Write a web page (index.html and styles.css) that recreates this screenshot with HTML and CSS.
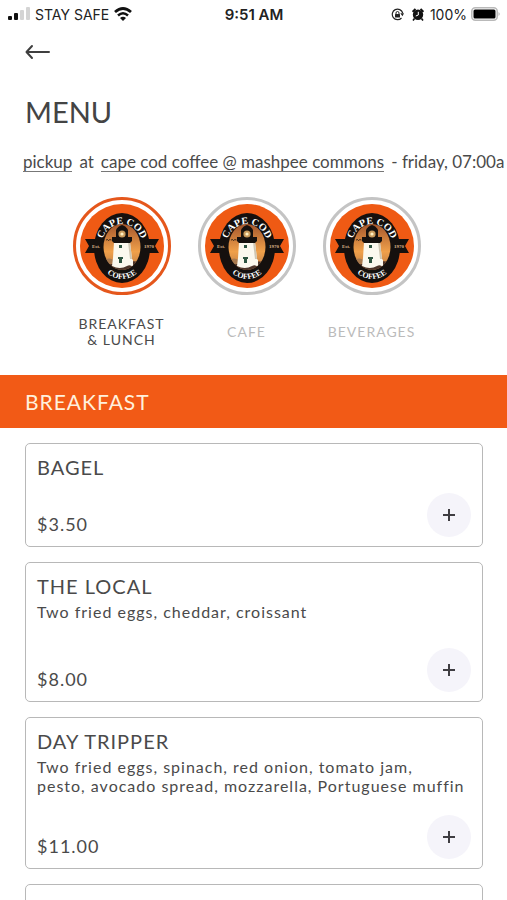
FILE: index.html
```
<!DOCTYPE html>
<html lang="en">
<head>
    <meta charset="UTF-8">
    <meta name="viewport" content="width=device-width, initial-scale=1.0">
    <title>Menu - Cape Cod Coffee</title>
    <link rel="stylesheet" href="styles.css">
</head>
<body>
    <!-- Shared logo -->
    <svg class="defs" width="0" height="0" aria-hidden="true">
        <defs>
            <linearGradient id="sky" x1="0" y1="0" x2="0" y2="1">
                <stop offset="0" stop-color="#a5562c"/>
                <stop offset="0.6" stop-color="#f0a04a"/>
                <stop offset="1" stop-color="#b97a45"/>
            </linearGradient>
            <clipPath id="scene"><ellipse cx="42" cy="43" rx="18.500" ry="23"/></clipPath>
            <path id="arcTop" d="M21 44 A21 24 0 0 1 63 44"/>
            <path id="arcBottom" d="M16 44 A26 31 0 0 0 68 44"/>
            <symbol id="logo" viewBox="0 0 84 84">
                <circle cx="42" cy="42" r="42" fill="#ef5a14"/>
                <path d="M5 35 H79 L75 42 L79 49 H5 L9 42 Z" fill="#15100e"/>
                <ellipse cx="42" cy="44" rx="28" ry="35" fill="#15100e"/>
                <ellipse cx="42" cy="43" rx="18.500" ry="23" fill="url(#sky)"/>
                <g clip-path="url(#scene)">
                    <path d="M22 58 Q32 55 62 58 V68 H22 Z" fill="#4c342a"/>
                    <path d="M24 56 Q29 53 34 56 V60 H24 Z" fill="#a8794d"/>
                    <path d="M34 38 H50 L52 55 L53 56 V63 Q50 60 47 62 Q40 66 32 62 L33 54 Z" fill="#fbf8ee"/>
                    <path d="M48 38 H50 L52 55 H50 Z" fill="#cfc6b3"/>
                </g>
                <path d="M36 34 V26 Q38 22 42 21 Q46 22 48 26 V34 Z" fill="#15100e"/>
                <path d="M32 33 H52 V37 L50 39 H34 L32 37 Z" fill="#15100e"/>
                <circle cx="42" cy="30" r="3.600" fill="#c99a5c"/>
                <circle cx="42" cy="30" r="1.600" fill="#fff1c4"/>
                <path d="M39 41 H42 V44 H39 Z M38 53 H43 V55 H42 V59 H39 V55 H38 Z" fill="#2d5340"/>
                <path d="M26 36 q2 -1 2.500 .5 q1 -1.500 3 -.5" fill="none" stroke="#15100e" stroke-width="0.800"/>
                <text class="logo-name"><textPath href="#arcTop" startOffset="50%">CAPE COD</textPath></text>
                <text class="logo-sub"><textPath href="#arcBottom" startOffset="50%">COFFEE</textPath></text>
                <text class="logo-year" x="16" y="44">Est.</text>
                <text class="logo-year" x="69" y="44">1970</text>
            </symbol>
        </defs>
    </svg>

    <!-- Status bar -->
    <div class="status-bar">
        <div class="status-left">
            <svg width="22" height="14" viewBox="0 0 22 14" aria-hidden="true">
                <rect x="0" y="9" width="4" height="4" rx="1" fill="#111"/>
                <rect x="6" y="6" width="4" height="7" rx="1" fill="#111"/>
                <rect x="12" y="3" width="4" height="10" rx="1" fill="#d4d4d4"/>
                <rect x="18" y="0" width="4" height="13" rx="1" fill="#d4d4d4"/>
            </svg>
            <span>STAY SAFE</span>
            <svg width="18" height="14" viewBox="0 0 18 14" aria-hidden="true">
                <path d="M1 5 Q9 -2 17 5" fill="none" stroke="#111" stroke-width="2.800"/>
                <path d="M4 8.500 Q9 4 14 8.500" fill="none" stroke="#111" stroke-width="2.500"/>
                <path d="M6 11 Q9 8.400 12 11 L9 14 Z" fill="#111"/>
            </svg>
        </div>
        <div class="status-time">9:51 AM</div>
        <div class="status-right">
            <svg width="13" height="13" viewBox="0 0 13 13" aria-hidden="true">
                <path d="M10.500 10 A5.300 5.300 0 1 1 11.700 5" fill="none" stroke="#222" stroke-width="1.200"/>
                <path d="M9.300 5.300 H13 L11.500 8.200 Z" fill="#222"/>
                <rect x="4" y="6" width="5" height="3.600" rx="0.500" fill="#222"/>
                <path d="M5 6.200 V5 A1.500 1.500 0 0 1 8 5 V6.200" fill="none" stroke="#222"/>
            </svg>
            <svg class="alarm" width="12" height="13" viewBox="0 0 12 13" aria-hidden="true">
                <circle cx="6" cy="6.800" r="5.200" fill="#111"/>
                <path d="M0.500 3.800 L3.500 1 M11.500 3.800 L8.500 1" stroke="#111" stroke-width="2"/>
                <path d="M2.500 10.500 L1 12.500 M9.500 10.500 L11 12.500" stroke="#111" stroke-width="1.600"/>
                <path d="M6.300 3.800 V7 L3.800 8" fill="none" stroke="#fff"/>
            </svg>
            <span>100%</span>
            <svg width="29" height="14" viewBox="0 0 29 14" aria-hidden="true">
                <rect x="0.800" y="0.800" width="25.400" height="12.400" rx="3.500" fill="#fff" stroke="#b9b9b9" stroke-width="1.500"/>
                <rect x="2.500" y="2.500" width="22" height="9" rx="1.500" fill="#000"/>
                <path d="M27.500 5 Q30 7 27.500 9 Z" fill="#b9b9b9"/>
            </svg>
        </div>
    </div>

    <header class="header">
        <button class="back" type="button" aria-label="Back">
            <svg width="25" height="16" viewBox="0 0 25 16" aria-hidden="true">
                <path d="M24 8 H2 M7 2 L1.500 8 L7 14" fill="none" stroke="#3f3f3f" stroke-width="2" stroke-linecap="round" stroke-linejoin="round"/>
            </svg>
        </button>
        <h1>MENU</h1>
        <p class="order-info"><a href="#">pickup</a><span>at</span><a href="#">cape cod coffee @ mashpee commons</a><span>- friday, 07:00a</span></p>
    </header>

    <!-- Categories -->
    <nav class="categories">
        <a href="#" class="category active">
            <span class="ring"><svg viewBox="0 0 84 84" aria-hidden="true"><use href="#logo"/></svg></span>
            <span class="category-name">BREAKFAST &amp; LUNCH</span>
        </a>
        <a href="#" class="category">
            <span class="ring"><svg viewBox="0 0 84 84" aria-hidden="true"><use href="#logo"/></svg></span>
            <span class="category-name">CAFE</span>
        </a>
        <a href="#" class="category">
            <span class="ring"><svg viewBox="0 0 84 84" aria-hidden="true"><use href="#logo"/></svg></span>
            <span class="category-name">BEVERAGES</span>
        </a>
    </nav>

    <!-- Items -->
    <main>
        <h2>BREAKFAST</h2>
        <div class="items">
            <article class="item">
                <h3>BAGEL</h3>
                <div class="item-footer">
                    <span class="price">$3.50</span>
                    <button class="add" type="button" aria-label="Add bagel">
                        <svg width="14" height="14" viewBox="0 0 14 14" aria-hidden="true"><path d="M7 1 V13 M1 7 H13" stroke="#3f3d42" stroke-width="2"/></svg>
                    </button>
                </div>
            </article>
            <article class="item">
                <h3>THE LOCAL</h3>
                <p class="description">Two fried eggs, cheddar, croissant</p>
                <div class="item-footer">
                    <span class="price">$8.00</span>
                    <button class="add" type="button" aria-label="Add the local">
                        <svg width="14" height="14" viewBox="0 0 14 14" aria-hidden="true"><path d="M7 1 V13 M1 7 H13" stroke="#3f3d42" stroke-width="2"/></svg>
                    </button>
                </div>
            </article>
            <article class="item">
                <h3>DAY TRIPPER</h3>
                <p class="description">Two fried eggs, spinach, red onion, tomato jam,<br>pesto, avocado spread, mozzarella, Portuguese muffin</p>
                <div class="item-footer">
                    <span class="price">$11.00</span>
                    <button class="add" type="button" aria-label="Add day tripper">
                        <svg width="14" height="14" viewBox="0 0 14 14" aria-hidden="true"><path d="M7 1 V13 M1 7 H13" stroke="#3f3d42" stroke-width="2"/></svg>
                    </button>
                </div>
            </article>
            <article class="item"></article>
        </div>
    </main>
</body>
</html>
```

FILE: styles.css
```
* {
    margin: 0;
    padding: 0;
    box-sizing: border-box;
}

html {
    scrollbar-width: none;
}

body {
    font-family: Lato, "Open Sans", sans-serif;
    background-color: #fff;
    color: #4a4a4a;
    overflow-x: hidden;
}

button {
    border: none;
    background: none;
    cursor: pointer;
}

svg {
    display: block;
}

.defs {
    position: absolute;
}

/* Status bar */
.status-bar {
    display: grid;
    grid-template-columns: 1fr auto 1fr;
    align-items: center;
    height: 28px;
    padding: 0 7px 0 8px;
    font-family: Inter, "Liberation Sans", sans-serif;
    font-size: 14px;
    color: #222;
}

.status-left,
.status-right {
    display: flex;
    align-items: center;
    gap: 5px;
}

.status-right {
    justify-content: flex-end;
    gap: 4px;
}

.alarm {
    margin: 0 2px 0 4px;
}

.status-time {
    font-size: 15px;
    font-weight: 600;
}

/* Header */
.header {
    padding: 12px 0 0 25px;
}

.back {
    display: block;
    padding: 4px 0;
}

h1 {
    margin-top: 30px;
    font-size: 29px;
    font-weight: 400;
    line-height: 36px;
    color: #444;
}

.order-info {
    display: flex;
    gap: 7px;
    margin: 20px 0 0 -2px;
    font-size: 17px;
    line-height: 24px;
    white-space: nowrap;
    overflow: hidden;
}

.order-info a {
    color: inherit;
    text-decoration: none;
    background: linear-gradient(#777, #777) 0 21px / 100% 1px no-repeat;
}

/* Categories */
.categories {
    display: flex;
    justify-content: center;
    gap: 27px;
    padding: 23px 14px 26px 0;
}

.category {
    display: flex;
    flex-direction: column;
    align-items: center;
    gap: 20px;
    width: 98px;
    color: #bbb;
    text-align: center;
    text-decoration: none;
}

.category.active {
    color: #4a4a4a;
}

.ring {
    width: 98px;
    height: 98px;
    padding: 4px;
    border: 3px solid #c4c4c4;
    border-radius: 50%;
}

.category.active .ring {
    border-color: #e5571c;
}

.category-name {
    display: flex;
    align-items: center;
    height: 34px;
    font-size: 14px;
    line-height: 16px;
    letter-spacing: 1px;
}

.logo-name,
.logo-sub,
.logo-year {
    font-family: "Liberation Serif", serif;
    font-weight: 700;
    fill: #fff;
    text-anchor: middle;
}

.logo-name {
    font-size: 10px;
}

.logo-sub {
    font-size: 8px;
}

.logo-year {
    font-size: 5px;
    fill: #d9b48c;
}

/* Items */
h2 {
    padding: 14px 25px 13px;
    background-color: #f25a16;
    color: #fff0dc;
    font-size: 21px;
    font-weight: 400;
    line-height: 26px;
    letter-spacing: 1px;
}

.items {
    display: flex;
    flex-direction: column;
    gap: 15px;
    padding: 15px 24px 15px 25px;
}

.item {
    display: flex;
    flex-direction: column;
    min-height: 104px;
    padding: 10px 11px 9px;
    border: 1px solid #b8b8b8;
    border-radius: 5px;
}

h3 {
    margin-bottom: 3px;
    font-size: 20px;
    font-weight: 400;
    line-height: 26px;
    letter-spacing: 1px;
}

.description {
    min-height: 46px;
    padding-bottom: 20px;
    font-size: 16px;
    line-height: 19px;
    letter-spacing: 1px;
}

.item-footer {
    display: flex;
    justify-content: space-between;
    align-items: flex-end;
    margin-top: auto;
}

.price {
    padding-bottom: 3px;
    font-size: 18px;
    line-height: 20px;
    letter-spacing: 1px;
}

.add {
    display: flex;
    align-items: center;
    justify-content: center;
    width: 44px;
    height: 44px;
    border-radius: 50%;
    background-color: #f5f4fa;
}
```
